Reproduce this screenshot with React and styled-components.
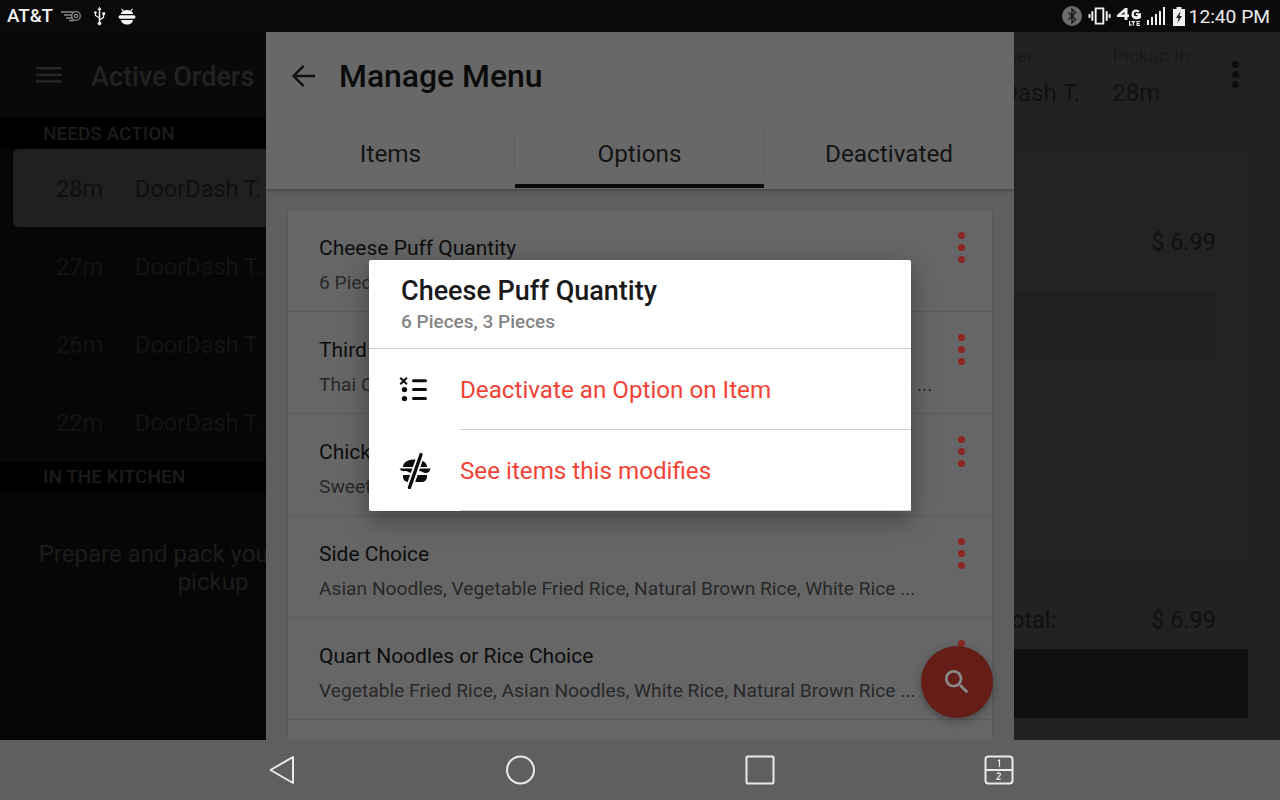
import styled, { createGlobalStyle } from 'styled-components';

const Global = createGlobalStyle`
  html, body { margin: 0; padding: 0; background: #000; }
  * { box-sizing: border-box; }
`

const Screen = styled.div`
  width: 1280px;
  height: 800px;
  display: flex;
  flex-direction: column;
  overflow: hidden;
  font-family: Roboto, "Liberation Sans", sans-serif;
`

const StatusBar = styled.div`
  height: 32px;
  background: #0a0a0a;
  color: #f2f2f2;
  display: flex;
  align-items: center;
  justify-content: space-between;
  padding: 0 10px 0 7px;
  flex: none;
`
const StatusGroup = styled.div`
  display: flex;
  align-items: center;
  gap: ${p => p.$gap || 0}px;
`
const Carrier = styled.span`
  font-size: 18.7px;
  font-weight: 500;
  margin-right: -4px;
`
const Clock = styled.span`
  font-size: 19.2px;
  margin-left: -2px;
  color: #eee;
`

const Main = styled.div`
  flex: 1;
  position: relative;
  display: flex;
  min-height: 0;
  background: #222;
`

const LeftColumn = styled.div`
  width: 426px;
  flex: none;
  background: #060606;
  display: flex;
  flex-direction: column;
`
const LeftHeader = styled.div`
  height: 86px;
  background: #090909;
  display: flex;
  align-items: center;
  padding: 0 0 0 36px;
  gap: 29px;
`
const LeftTitle = styled.div`
  font-size: 27px;
  font-weight: 500;
  padding-top: 4px;
  color: #222;
`
const SectionBand = styled.div`
  height: ${p => p.$h || 31}px;
  margin-top: ${p => p.$top || 0}px;
  background: #000;
  color: #1c1c1c;
  font-size: 19px;
  font-weight: 500;
  padding-left: 43px;
  line-height: ${p => p.$h || 31}px;
`
const OrderRow = styled.div`
  height: 78px;
  margin-left: 13px;
  padding: 2px 0 0 43px;
  display: flex;
  align-items: center;
  gap: 32px;
  font-size: 23.5px;
  border-radius: 6px 0 0 6px;
  background: ${p => (p.$active ? '#202020' : 'transparent')};
  color: ${p => (p.$active ? '#0f0f0f' : '#131313')};
`
const Empty = styled.div`
  padding: 48px 30px 0;
  font-size: 24px;
  line-height: 28px;
  text-align: center;
  color: #1c1c1c;
`

const RightColumn = styled.div`
  flex: 1;
  display: flex;
  flex-direction: column;
  color: #111;
  font-size: 23.5px;
`
const RightHeader = styled.div`
  height: 86px;
  flex: none;
  display: flex;
  align-items: center;
  padding-left: 525px;
  gap: 32px;
`
const Cell = styled.div`
  display: flex;
  flex-direction: column;
  gap: 12px;
  font-size: 24px;
  white-space: nowrap;
`
const CellLabel = styled.span`
  font-size: 19px;
  color: #1a1a1a;
`
const RightKebab = styled.div`
  margin-left: auto;
  margin-right: 41px;
  margin-top: -2px;
`
const DetailArea = styled.div`
  flex: 1;
  margin: 37px 32px 0 0;
  display: flex;
  flex-direction: column;
  align-items: flex-end;
`
const DetailCard = styled.div`
  width: 100%;
  height: 405px;
  flex: none;
  background: #232323;
  display: flex;
  flex-direction: column;
  align-items: flex-end;
`
const Price = styled.div`
  margin-right: 32px;
  margin-top: ${p => p.$top}px;
  width: 218px;
  display: flex;
  justify-content: space-between;
  color: #101010;
`
const NoteBox = styled.div`
  width: 400px;
  height: 70px;
  margin: 34px 32px 0 0;
  background: #202020;
`
const BlackButton = styled.div`
  width: 100%;
  height: 69px;
  margin-top: 15px;
  border-radius: 3px;
  background: #0f0f0f;
`

const Panel = styled.div`
  position: absolute;
  left: 266px;
  top: 0;
  bottom: 0;
  width: 748px;
  background: #5f5f5f;
  display: flex;
  flex-direction: column;
  overflow: hidden;
`
const PanelHead = styled.div`
  background: #686868;
  box-shadow: 0 1px 4px rgba(0, 0, 0, 0.35);
  flex: none;
  position: relative;
`
const TitleRow = styled.div`
  height: 86px;
  display: flex;
  align-items: center;
  padding: 2px 0 0 20px;
  gap: 19px;
`
const PanelTitle = styled.div`
  font-size: 31.9px;
  font-weight: 500;
  color: #0a0a0a;
`
const Tabs = styled.div`
  height: 71px;
  display: grid;
  grid-template-columns: 249px 249px 250px;
`
const Tab = styled.div`
  position: relative;
  display: flex;
  align-items: center;
  justify-content: center;
  font-size: 24.3px;
  color: #141414;
  ${p => p.$divider && `
    &::after {
      content: '';
      position: absolute;
      right: 0;
      top: 14px;
      height: 41px;
      width: 1px;
      background: #5e5e5e;
    }
  `}
  ${p => p.$active && `
    &::before {
      content: '';
      position: absolute;
      left: 0;
      right: 0;
      bottom: 1px;
      height: 4px;
      background: #0a0a0a;
    }
  `}
`
const List = styled.div`
  margin: 20px 21px 0;
  background: #666;
  border: 1px solid #595959;
  flex: none;
`
const MenuRow = styled.div`
  height: 102px;
  padding: 24px 0 0 31px;
  position: relative;
  border-bottom: 1px solid #5c5c5c;
`
const RowTitle = styled.div`
  font-size: 21px;
  line-height: 28px;
  color: #0d0d0d;
`
const RowSub = styled.div`
  margin-top: 9px;
  font-size: 19.2px;
  line-height: 24px;
  white-space: nowrap;
  color: #282828;
`
const RowKebab = styled.div`
  position: absolute;
  right: 27px;
  top: 22px;
  display: flex;
  flex-direction: column;
  gap: 5px;
`
const Dot = styled.span`
  width: 7px;
  height: 7px;
  border-radius: 50%;
  display: block;
  background: #8a2621;
`
const Fab = styled.div`
  position: absolute;
  left: 655px;
  bottom: 22px;
  width: 72px;
  height: 72px;
  border-radius: 50%;
  background: #651d17;
  display: flex;
  align-items: center;
  justify-content: center;
  box-shadow: 0 3px 8px rgba(0, 0, 0, 0.3);
`

const Dialog = styled.div`
  position: absolute;
  left: 369px;
  top: 228px;
  width: 542px;
  height: 251px;
  background: #fff;
  border-radius: 2px;
  box-shadow: 0 8px 24px rgba(0, 0, 0, 0.35);
`
const DialogHead = styled.div`
  height: 89px;
  padding: 15px 0 0 32px;
  border-bottom: 1px solid #cfcfcf;
`
const DialogTitle = styled.div`
  font-size: 27px;
  font-weight: 500;
  line-height: 33px;
  color: #1a1a1a;
`
const DialogSub = styled.div`
  margin-top: 2px;
  font-size: 19px;
  font-weight: 500;
  line-height: 24px;
  color: #858585;
`
const DialogAction = styled.div`
  height: 81px;
  display: flex;
  align-items: stretch;
  padding-left: 30px;
`
const ActionIcon = styled.div`
  width: 61px;
  flex: none;
  display: flex;
  align-items: center;
`
const ActionLabel = styled.div`
  flex: 1;
  display: flex;
  align-items: center;
  padding-top: 2px;
  font-size: 24.2px;
  color: #f44336;
  border-bottom: 1px solid #cfcfcf;
`

const NavBar = styled.div`
  height: 60px;
  flex: none;
  background: #5f5f5f;
  display: grid;
  grid-template-columns: repeat(4, 32px);
  justify-content: center;
  column-gap: 207px;
  align-items: center;
`

const Hamburger = () => (
  <svg width="26" height="16" viewBox="0 0 26 16" fill="#262626">
    <rect y="0" width="26" height="2.4" />
    <rect y="6.6" width="26" height="2.4" />
    <rect y="13.2" width="26" height="2.4" />
  </svg>
)

const BackArrow = () => (
  <svg width="34" height="34" viewBox="0 0 24 24" fill="none" stroke="#111" strokeWidth="1.7">
    <path d="M20.500 12H5.500M12.500 4.800L5.300 12l7.200 7.200" />
  </svg>
)

const SearchIcon = () => (
  <svg width="32" height="32" viewBox="0 0 24 24" fill="#8b8b8b">
    <path d="M15.5 14h-.79l-.28-.27C15.41 12.59 16 11.11 16 9.5 16 5.91 13.09 3 9.5 3S3 5.91 3 9.5 5.91 16 9.5 16c1.61 0 3.09-.59 4.23-1.57l.27.28v.79l5 4.99L20.49 19l-4.99-5zm-6 0C7.01 14 5 11.99 5 9.5S7.01 5 9.5 5 14 7.01 14 9.5 11.99 14 9.5 14z" />
  </svg>
)

const ChecklistIcon = () => (
  <svg width="30" height="28" viewBox="0 0 30 28" fill="#0d0d0d">
    <path d="M2 1l2.600 2.600L7.200 1l1.400 1.400L6 5l2.600 2.600-1.400 1.400-2.600-2.600L2 9 .6 7.600 3.200 5 .6 2.400z" />
    <rect x="13" y="3.200" width="15" height="3" rx="1.500" />
    <rect x="13" y="12.100" width="15" height="3" rx="1.500" />
    <rect x="13" y="21.100" width="15" height="3" rx="1.500" />
    <circle cx="5.500" cy="13.600" r="2.700" />
    <circle cx="5.500" cy="22.600" r="2.700" />
  </svg>
)

const BurgerSlashIcon = () => (
  <svg width="32" height="36" viewBox="0 0 32 36" fill="#0d0d0d">
    <path d="M4 14C4 9 9 6.500 16 6.500S28 9 28 14z" />
    <path d="M.5 15.500h31c-.5 3-2.500 4.500-4.500 4.500-3 0-4-2-7-2s-4 2-7 2-4-2-7-2c-1 0-3.500 1-5.500-2.500z" />
    <path d="M4 22h24v1.500c0 3-2 5.500-5 5.500H9c-3 0-5-2.500-5-5.500z" />
    <path d="M22 1.500L10.500 34.500" stroke="#fff" strokeWidth="7" fill="none" />
    <path d="M22 1.500L10.500 34.500" stroke="#0d0d0d" strokeWidth="3.400" strokeLinecap="round" fill="none" />
  </svg>
)

const KebabDots = ({ color, size, gap }) => (
  <svg width={size} height={size * 3 + gap * 2} style={{ display: 'block' }}>
    {[0, 1, 2].map(i => (
      <circle key={i} cx={size / 2} cy={size / 2 + i * (size + gap)} r={size / 2} fill={color} />
    ))}
  </svg>
)

const SpeedIcon = () => (
  <svg width="20" height="12" viewBox="0 0 20 12" fill="none" stroke="#8a8a8a" strokeWidth="1.300">
    <path d="M0 2h12M3 5h8M5 8h6M8 10.500h5" />
    <circle cx="15" cy="6" r="4.300" />
    <circle cx="15" cy="6" r="1.700" />
  </svg>
)

const UsbIcon = () => (
  <svg width="13" height="20" viewBox="0 0 14 20" fill="#f0f0f0">
    <path d="M7 0l2.200 3.500H7.800V13l3-2V9H10V6h3v3h-1v2.800l-4.200 2.800v1.600a1.900 1.900 0 1 1-1.600 0V12.500L2 9.700V7.600a1.400 1.400 0 1 1 1.200 0V9l3 2V3.500H4.800z" />
  </svg>
)

const BugIcon = () => (
  <svg width="18" height="17" viewBox="0 0 18 17" fill="#f4f4f4">
    <path d="M4 .5l1.600 2.200C6.500 2.300 7.700 2 9 2s2.500.3 3.400.7L14 .5l.9.6-1.500 2.200C14.400 4 15 5 15.200 6H2.800C3 5 3.600 4 4.600 3.300L3.100 1.100z" />
    <rect x="0.500" y="7.300" width="17" height="3.400" rx="1.700" />
    <path d="M3 12h12c-.2 2.500-2.500 4.500-6 4.500S3.200 14.500 3 12z" />
  </svg>
)

const BluetoothIcon = () => (
  <svg width="20" height="20" viewBox="0 0 20 20">
    <circle cx="10" cy="10" r="10" fill="#6c6c6c" />
    <path d="M6.500 6.500l7 7L10 17V3l3.500 3.500-7 7" fill="none" stroke="#111" strokeWidth="1.300" />
  </svg>
)

const VibrateIcon = () => (
  <svg width="23" height="20" viewBox="0 0 24 20" fill="#f2f2f2">
    <path fillRule="evenodd" d="M7 1h10v18H7zM9 3v14h6V3z" />
    <rect x="3.500" y="5" width="2" height="10" />
    <rect x="18.500" y="5" width="2" height="10" />
    <rect x="0.500" y="8" width="2" height="4" />
    <rect x="21.500" y="8" width="2" height="4" />
  </svg>
)

const NetworkIcon = () => (
  <svg width="24" height="20" viewBox="0 0 24 20" fill="#f2f2f2">
    <path d="M8 2h2.500v6.500H12V11h-1.500v3H7.500v-3H0V9zM7.500 8.500V6L4 8.500z" />
    <path d="M19 3.500c1.700 0 3 .7 3.700 1.800l-2 1.200c-.4-.5-1-.8-1.700-.8-1.200 0-2.200 1-2.200 2.300s1 2.300 2.400 2.300c.5 0 1-.1 1.300-.3V9h-1.800V7.200H24v4.600c-1.200 1-2.800 1.500-4.500 1.500-3 0-5-2-5-4.900s2-4.900 4.500-4.900z" />
    <rect x="12" y="15" width="1.200" height="4.500" />
    <rect x="12" y="18.500" width="2.800" height="1" />
    <rect x="14.500" y="15" width="3.600" height="1.200" />
    <rect x="15.700" y="15" width="1.200" height="4.500" />
    <path d="M19.500 15H23v1.100h-2.400v.9h2v1h-2v.8H23v1.200h-3.500z" />
  </svg>
)

const SignalIcon = () => (
  <svg width="20" height="18" viewBox="0 0 20 18" fill="#f2f2f2">
    <rect x="0" y="13" width="2" height="5" />
    <rect x="4" y="10" width="2" height="8" />
    <rect x="8" y="7" width="2" height="11" />
    <rect x="12" y="4" width="2" height="14" />
    <rect x="16" y="0" width="2" height="18" />
  </svg>
)

const BatteryIcon = () => (
  <svg width="12" height="19" viewBox="0 0 12 19">
    <path d="M3.500 0h5v2H12v17H0V2h3.500z" fill="#efefef" />
    <path d="M7.500 4L3 11h2.500L4.500 16 9 9H6.500z" fill="#222" />
  </svg>
)

const NavBack = () => (
  <svg width="32" height="32" viewBox="0 0 32 32" fill="none" stroke="#eaeaea" strokeWidth="2" strokeLinejoin="round">
    <path d="M27 3v26L4.500 16z" />
  </svg>
)
const NavHome = () => (
  <svg width="32" height="32" viewBox="0 0 32 32" fill="none" stroke="#eaeaea" strokeWidth="2">
    <circle cx="15.500" cy="16" r="13.500" />
  </svg>
)
const NavRecent = () => (
  <svg width="32" height="32" viewBox="0 0 32 32" fill="none" stroke="#eaeaea" strokeWidth="2">
    <rect x="2.500" y="2.500" width="27" height="27" rx="1" />
  </svg>
)
const NavSplit = () => (
  <svg width="32" height="32" viewBox="0 0 32 32" fill="none" stroke="#eaeaea" strokeWidth="2">
    <rect x="2.500" y="2.500" width="27" height="27" rx="3" />
    <path d="M3 16h26" />
    <path d="M15 7l1.500-1v7" strokeWidth="1.200" />
    <path d="M14 20c.5-1.500 3.500-1.500 3.500.3 0 1.400-3.500 3.700-3.500 5h3.700" strokeWidth="1.200" />
  </svg>
)

const orders = [
  { time: '28m', active: true },
  { time: '27m' },
  { time: '26m' },
  { time: '22m' },
]

const menuRows = [
  { title: 'Cheese Puff Quantity', sub: '6 Pieces, 3 Pieces' },
  { title: 'Third Item Choice', sub: 'Thai Curry Rice, Asian Noodles, Natural Brown Rice, White Rice, Soups ...' },
  { title: 'Chicken Sauce Choice', sub: 'Sweet and Sour Sauce, Garlic Sauce' },
  { title: 'Side Choice', sub: 'Asian Noodles, Vegetable Fried Rice, Natural Brown Rice, White Rice ...' },
  { title: 'Quart Noodles or Rice Choice', sub: 'Vegetable Fried Rice, Asian Noodles, White Rice, Natural Brown Rice ...' },
]

function App() {
  return (
    <Screen>
      <Global />
      <StatusBar>
        <StatusGroup $gap={12}>
          <Carrier>AT&amp;T</Carrier>
          <SpeedIcon />
          <UsbIcon />
          <BugIcon />
        </StatusGroup>
        <StatusGroup $gap={6}>
          <BluetoothIcon />
          <VibrateIcon />
          <NetworkIcon />
          <SignalIcon />
          <BatteryIcon />
          <Clock>12:40 PM</Clock>
        </StatusGroup>
      </StatusBar>

      <Main>
        <LeftColumn>
          <LeftHeader>
            <Hamburger />
            <LeftTitle>Active Orders</LeftTitle>
          </LeftHeader>
          <SectionBand>NEEDS ACTION</SectionBand>
          {orders.map(o => (
            <OrderRow key={o.time} $active={o.active}>
              <span>{o.time}</span>
              <span>DoorDash T.</span>
            </OrderRow>
          ))}
          <SectionBand $h={30} $top={1}>IN THE KITCHEN</SectionBand>
          <Empty>Prepare and pack your orders for pickup</Empty>
        </LeftColumn>

        <RightColumn>
          <RightHeader>
            <Cell>
              <CellLabel>Customer</CellLabel>
              <span>DoorDash T.</span>
            </Cell>
            <Cell>
              <CellLabel>Pickup in</CellLabel>
              <span>28m</span>
            </Cell>
            <RightKebab>
              <KebabDots color="#0c0c0c" size={7} gap={3} />
            </RightKebab>
          </RightHeader>
          <DetailArea>
            <DetailCard>
              <Price $top={73}><span></span><span>$ 6.99</span></Price>
              <NoteBox />
            </DetailCard>
            <Price $top={46}><span>Total:</span><span>$ 6.99</span></Price>
            <BlackButton />
          </DetailArea>
        </RightColumn>

        <Panel>
          <PanelHead>
            <TitleRow>
              <BackArrow />
              <PanelTitle>Manage Menu</PanelTitle>
            </TitleRow>
            <Tabs>
              <Tab $divider>Items</Tab>
              <Tab $active $divider>Options</Tab>
              <Tab>Deactivated</Tab>
            </Tabs>
          </PanelHead>
          <List>
            {menuRows.map(r => (
              <MenuRow key={r.title}>
                <RowTitle>{r.title}</RowTitle>
                <RowSub>{r.sub}</RowSub>
                <RowKebab>
                  <Dot />
                  <Dot />
                  <Dot />
                </RowKebab>
              </MenuRow>
            ))}
            <MenuRow />
          </List>
          <Fab>
            <SearchIcon />
          </Fab>
        </Panel>

        <Dialog>
          <DialogHead>
            <DialogTitle>Cheese Puff Quantity</DialogTitle>
            <DialogSub>6 Pieces, 3 Pieces</DialogSub>
          </DialogHead>
          <DialogAction>
            <ActionIcon><ChecklistIcon /></ActionIcon>
            <ActionLabel>Deactivate an Option on Item</ActionLabel>
          </DialogAction>
          <DialogAction>
            <ActionIcon><BurgerSlashIcon /></ActionIcon>
            <ActionLabel>See items this modifies</ActionLabel>
          </DialogAction>
        </Dialog>
      </Main>

      <NavBar>
        <NavBack />
        <NavHome />
        <NavRecent />
        <NavSplit />
      </NavBar>
    </Screen>
  );
}

export default App;
